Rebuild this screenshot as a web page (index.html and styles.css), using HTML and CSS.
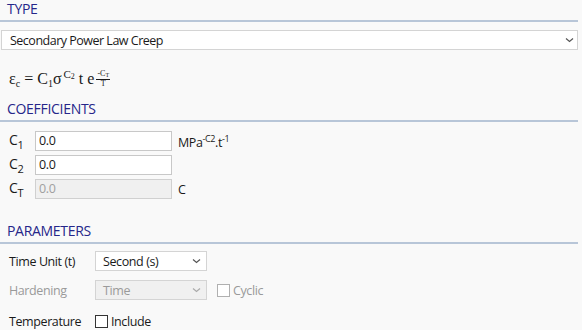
FILE: index.html
```html
<!DOCTYPE html>
<html lang="en">
<head>
    <meta charset="UTF-8">
    <title>Creep Model</title>
    <link rel="stylesheet" href="styles.css">
</head>
<body>
<div class="panel">
    <div class="section-title">TYPE</div>
    <div class="select wide">
        <span>Secondary Power Law Creep</span>
        <svg class="chev" width="9" height="6" viewBox="0 0 9 6"><path d="M1 1.5 L4.5 4.5 L8 1.5" fill="none" stroke="#555" stroke-width="1.2"/></svg>
    </div>
    <div class="formula">
        ε<sub>c</sub> = C<sub>1</sub>σ<sup class="pw">C<sub>2</sub></sup> t e<sup class="frac"><span class="num">-C<sub>T</sub></span><span class="den">T</span></sup>
    </div>

    <div class="section-title">COEFFICIENTS</div>
    <div class="coef-row">
        <span class="coef-label">C<sub>1</sub></span>
        <div class="input">0.0</div>
        <span class="unit">MPa<sup>-C2</sup>.t<sup>-1</sup></span>
    </div>
    <div class="coef-row">
        <span class="coef-label">C<sub>2</sub></span>
        <div class="input">0.0</div>
    </div>
    <div class="coef-row">
        <span class="coef-label">C<sub>T</sub></span>
        <div class="input disabled">0.0</div>
        <span class="unit">C</span>
    </div>

    <div class="section-title params">PARAMETERS</div>
    <div class="param-row">
        <span class="param-label">Time Unit (t)</span>
        <div class="select small">
            <span>Second (s)</span>
            <svg class="chev" width="9" height="6" viewBox="0 0 9 6"><path d="M1 1.5 L4.5 4.5 L8 1.5" fill="none" stroke="#555" stroke-width="1.2"/></svg>
        </div>
    </div>
    <div class="param-row off">
        <span class="param-label">Hardening</span>
        <div class="select small disabled">
            <span>Time</span>
            <svg class="chev" width="9" height="6" viewBox="0 0 9 6"><path d="M1 1.5 L4.5 4.5 L8 1.5" fill="none" stroke="#aaa" stroke-width="1.2"/></svg>
        </div>
        <label class="check"><span class="box"></span>Cyclic</label>
    </div>
    <div class="param-row last">
        <span class="param-label">Temperature</span>
        <label class="check"><span class="box"></span>Include</label>
    </div>
</div>
</body>
</html>
```

FILE: styles.css
```css
body {
    margin: 0;
    background: #f9f9f9;
    font-family: "Open Sans", "Noto Sans", sans-serif;
    font-size: 12.5px;
    letter-spacing: -0.4px;
    color: #1a1a1a;
}

.panel {
    width: 578px;
}

.section-title {
    margin: 0;
    padding: 0 0 2px 7px;
    height: 18px;
    line-height: 18px;
    font-size: 14px;
    letter-spacing: -0.3px;
    color: #26268a;
    border-bottom: 2px solid #b8c6d8;
}

.select {
    display: flex;
    align-items: center;
    justify-content: space-between;
    box-sizing: border-box;
    height: 20px;
    padding: 0 5px 0 7px;
    background: #fff;
    border: 1px solid #d4d4d4;
}

.select.wide {
    margin: 8px 0 0 1px;
    width: 577px;
    padding: 0 3px 0 8px;
    letter-spacing: -0.5px;
}

.select.small {
    width: 112px;
}

.select.disabled {
    background: #f0f0f0;
    color: #9a9a9a;
}

.chev {
    display: block;
}

.formula {
    height: 50px;
    padding: 14px 0 0 9px;
    box-sizing: border-box;
    font-family: "Liberation Serif", serif;
    font-size: 16px;
    letter-spacing: 0;
    line-height: 20px;
}

.formula sub {
    font-size: 10px;
    vertical-align: -3px;
}

.formula .pw {
    font-size: 11px;
    vertical-align: 6px;
    margin-left: 2px;
}

.formula .pw sub {
    font-size: 8px;
    vertical-align: -1px;
}

.formula .frac {
    display: inline-flex;
    flex-direction: column;
    align-items: center;
    font-size: 8px;
    line-height: 8px;
    vertical-align: 8px;
    margin-left: 2px;
}

.formula .frac sub {
    font-size: 6px;
    vertical-align: -1px;
}

.formula .num {
    border-bottom: 1px solid #1a1a1a;
    padding: 0 1px;
}

.coef-row {
    display: flex;
    align-items: center;
    height: 20px;
    margin-bottom: 4px;
}

.section-title + .coef-row {
    margin-top: 9px;
}

.coef-label {
    width: 26px;
    padding-left: 9px;
    font-size: 14px;
}

.coef-label sub {
    font-size: 11px;
    vertical-align: -4px;
}

.input {
    box-sizing: border-box;
    width: 137px;
    height: 20px;
    line-height: 18px;
    padding-left: 3px;
    background: #fff;
    border: 1px solid #c8c8c8;
}

.input.disabled {
    background: #f0f0f0;
    color: #a0a0a0;
    border-color: #d0d0d0;
}

.unit {
    margin-left: 6px;
}

.unit sup {
    font-size: 9px;
    vertical-align: 5px;
}

.params {
    margin-top: 23px;
}

.param-row {
    display: flex;
    align-items: center;
    height: 20px;
    margin-top: 9px;
}

.section-title + .param-row {
    margin-top: 7px;
}

.param-row.last {
    margin-top: 11px;
}

.param-row.off {
    color: #9a9a9a;
}

.param-label {
    width: 86px;
    padding-left: 9px;
}

.check {
    display: flex;
    align-items: center;
    margin-left: 10px;
}

.param-row .param-label + .check {
    margin-left: 0;
}

.box {
    box-sizing: border-box;
    width: 13px;
    height: 13px;
    margin-right: 3px;
    background: #fff;
    border: 1px solid #333;
}

.off .box {
    border-color: #b0b0b0;
}
```
